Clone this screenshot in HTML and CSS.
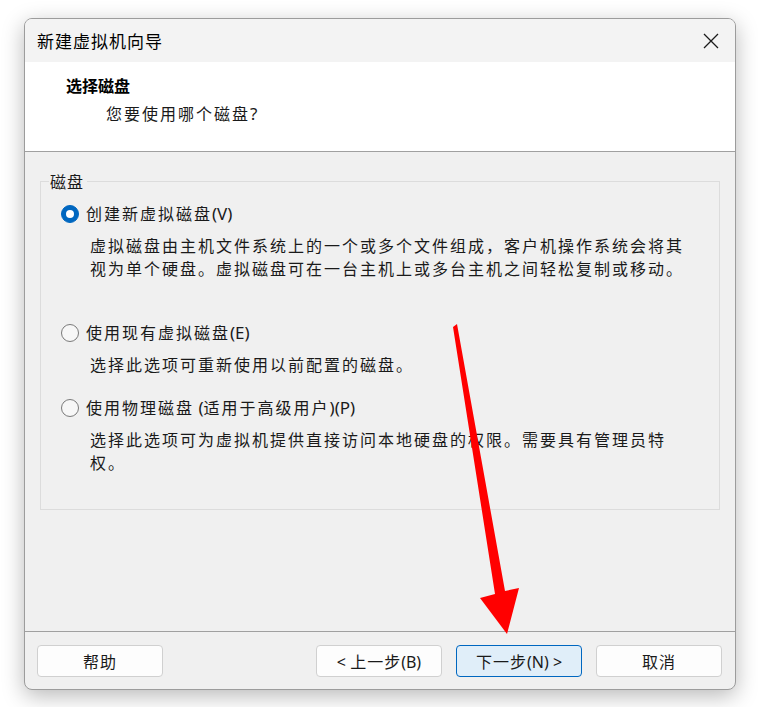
FILE: index.html
```html
<!DOCTYPE html>
<html lang="zh-CN">
<head>
<meta charset="utf-8">
<title>新建虚拟机向导</title>
<link rel="stylesheet" href="styles.css">
</head>
<body>
<div class="window">
  <div class="titlebar">
    <span class="title">新建虚拟机向导</span>
    <svg class="close" width="16" height="16" viewBox="0 0 16 16"><path d="M1 1 L15 15 M15 1 L1 15" stroke="#1a1a1a" stroke-width="1.3" fill="none"/></svg>
  </div>
  <div class="header">
    <div class="h-title">选择磁盘</div>
    <div class="h-sub">您要使用哪个磁盘<span class="lat">?</span></div>
  </div>
  <div class="content">
    <fieldset class="group">
      <legend>磁盘</legend>
      <div class="option first">
        <div class="row"><span class="radio checked"></span><span class="label">创建新虚拟磁盘<span class="lat">(V)</span></span></div>
        <div class="desc">虚拟磁盘由主机文件系统上的一个或多个文件组成，客户机操作系统会将其<br>视为单个硬盘。虚拟磁盘可在一台主机上或多台主机之间轻松复制或移动。</div>
      </div>
      <div class="option second">
        <div class="row"><span class="radio"></span><span class="label">使用现有虚拟磁盘<span class="lat">(E)</span></span></div>
        <div class="desc">选择此选项可重新使用以前配置的磁盘。</div>
      </div>
      <div class="option third">
        <div class="row"><span class="radio"></span><span class="label">使用物理磁盘<span class="lat"> (</span>适用于高级用户<span class="lat">)(P)</span></span></div>
        <div class="desc">选择此选项可为虚拟机提供直接访问本地硬盘的权限。需要具有管理员特<br>权。</div>
      </div>
    </fieldset>
  </div>
  <div class="footer">
    <button class="btn">帮助</button>
    <div class="spacer"></div>
    <button class="btn"><span class="lat">&lt; </span>上一步<span class="lat">(B)</span></button>
    <button class="btn primary">下一步<span class="lat">(N) &gt;</span></button>
    <button class="btn">取消</button>
  </div>
</div>
<svg class="arrow" width="758" height="707" viewBox="0 0 758 707">
  <polygon points="453,327 457,324 505,591 519,588 507,634 480,598 495,594" fill="#ff0000"/>
</svg>
</body>
</html>
```
FILE: styles.css
```css
html, body {
  margin: 0;
  padding: 0;
  background: #ffffff;
}
body {
  width: 758px;
  height: 707px;
  overflow: hidden;
  position: relative;
  font-family: "Noto Sans CJK SC", "Noto Sans", sans-serif;
  color: #1a1a1a;
}
.lat {
  font-family: "Noto Sans", "Open Sans", sans-serif;
  letter-spacing: 0;
  font-size: 17px;
}
.window {
  margin: 18px 0 0 24px;
  width: 712px;
  height: 672px;
  box-sizing: border-box;
  border: 1px solid #9c9c9c;
  border-radius: 8px;
  background: #f0f0f0;
  box-shadow: 0 6px 22px rgba(0, 0, 0, 0.28);
  display: flex;
  flex-direction: column;
  overflow: hidden;
}
.titlebar {
  height: 43px;
  background: #f3f3f3;
  display: flex;
  align-items: center;
  padding: 0 16px 0 12px;
  flex-shrink: 0;
}
.title {
  font-size: 17px;
  letter-spacing: 1px;
  color: #000;
  flex: 1;
  line-height: 22px;
  margin-top: 1px;
}
.close {
  display: block;
  margin-top: 1px;
}
.header {
  background: #ffffff;
  border-bottom: 1px solid #a0a0a0;
  flex-shrink: 0;
  box-sizing: border-box;
  height: 90px;
}
.h-title {
  font-size: 16px;
  font-weight: 700;
  line-height: 24px;
  padding: 11px 0 0 41px;
  color: #000;
}
.h-sub {
  font-size: 16px;
  letter-spacing: 2px;
  line-height: 24px;
  padding: 4px 0 0 81px;
  color: #1a1a1a;
}
.content {
  flex: 1;
  padding: 19px 0 0 15px;
}
.group {
  margin: 0;
  width: 680px;
  height: 339px;
  box-sizing: border-box;
  border: 1px solid #dcdcdc;
  padding: 0 0 0 20px;
  min-width: 0;
}
.group legend {
  font-size: 16px;
  letter-spacing: 1px;
  line-height: 20px;
  padding: 0 3px 0 1px;
  margin-left: -12px;
  color: #1a1a1a;
}
.option .row {
  display: flex;
  align-items: center;
  height: 23px;
}
.option.first { padding-top: 11px; }
.option.second { padding-top: 41px; }
.option.third { padding-top: 20px; }
.radio {
  width: 18px;
  height: 18px;
  box-sizing: border-box;
  border-radius: 50%;
  border: 1px solid #7a7a7a;
  background: #f7f7f7;
  flex-shrink: 0;
  position: relative;
}
.radio.checked {
  background: #0067c0;
  border-color: #0067c0;
}
.radio.checked::after {
  content: "";
  position: absolute;
  left: 4px;
  top: 4px;
  width: 8px;
  height: 8px;
  border-radius: 50%;
  background: #ffffff;
}
.label {
  font-size: 16px;
  letter-spacing: 2px;
  line-height: 23px;
  margin-left: 7px;
  color: #1a1a1a;
  white-space: pre;
}
.desc {
  font-size: 16px;
  letter-spacing: 2px;
  line-height: 23px;
  margin: 9px 0 0 29px;
  white-space: nowrap;
  color: #1a1a1a;
}
.footer {
  height: 58px;
  box-sizing: border-box;
  border-top: 1px solid #a0a0a0;
  display: flex;
  align-items: flex-start;
  gap: 14px;
  padding: 13px 13px 0 12px;
  flex-shrink: 0;
}
.spacer { flex: 1; }
.btn {
  width: 126px;
  height: 32px;
  flex-shrink: 0;
  box-sizing: border-box;
  border: 1px solid #d0d0d0;
  border-radius: 4px;
  background: #fdfdfd;
  font-family: "Noto Sans CJK SC", "Noto Sans", sans-serif;
  font-size: 16px;
  letter-spacing: 1px;
  color: #1a1a1a;
  padding: 0;
  line-height: 30px;
}
.btn .lat { font-size: 16px; }
.btn.primary {
  background: #e0eef9;
  border-color: #0067c0;
}
.arrow {
  position: absolute;
  left: 0;
  top: 0;
  pointer-events: none;
}
```
